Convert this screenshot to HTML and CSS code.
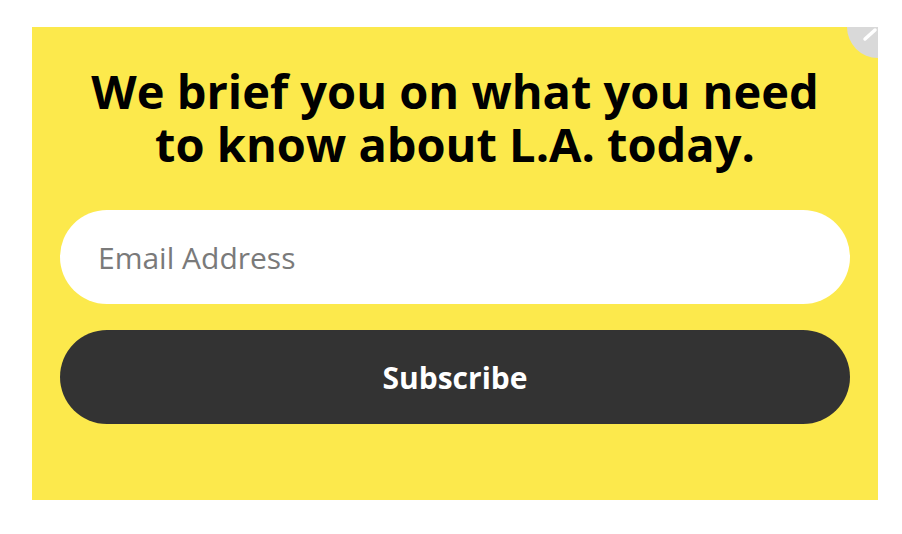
FILE: index.html
```html
<!DOCTYPE html>
<html lang="en">
<head>
    <meta charset="UTF-8">
    <title>Newsletter signup</title>
    <link rel="stylesheet" href="styles.css">
</head>
<body>
    <div class="popup">
        <button class="close-btn" aria-label="Close">
            <svg width="62" height="62" viewBox="0 0 62 62">
                <line x1="18" y1="43" x2="28" y2="34" stroke="#fff" stroke-width="3.5" stroke-linecap="round"/>
                <line x1="34" y1="34" x2="44" y2="43" stroke="#fff" stroke-width="3.5" stroke-linecap="round"/>
            </svg>
        </button>

        <h1 class="headline">We brief you on what you need<br>to know about L.A. today.</h1>

        <form class="signup-form">
            <input class="email-input" type="email" placeholder="Email Address">
            <button class="subscribe-btn" type="button">Subscribe</button>
        </form>
    </div>
</body>
</html>
```

FILE: styles.css
```css
body {
    margin: 0;
    padding: 27px 24px 0 32px;
    background: #fff;
    font-family: 'Open Sans', 'Noto Sans', sans-serif;
}

.popup {
    position: relative;
    overflow: hidden;
    width: 846px;
    height: 473px;
    box-sizing: border-box;
    padding: 38px 28px 0 28px;
    background: #fce94c;
}

.close-btn {
    position: absolute;
    top: -31px;
    right: -31px;
    width: 62px;
    height: 62px;
    padding: 0;
    border: none;
    border-radius: 50%;
    background: #d9d9d9;
    cursor: pointer;
}

.close-btn svg {
    display: block;
}

.headline {
    margin: 0 0 39px 0;
    font-size: 47px;
    line-height: 53px;
    font-weight: 700;
    text-align: center;
    color: #000;
}

.signup-form {
    display: flex;
    flex-direction: column;
    gap: 26px;
}

.email-input {
    height: 94px;
    box-sizing: border-box;
    padding: 0 38px;
    border: none;
    border-radius: 47px;
    background: #fff;
    font-family: inherit;
    font-size: 30px;
    color: #333;
    outline: none;
}

.email-input::placeholder {
    color: #7a7a7a;
}

.subscribe-btn {
    height: 94px;
    border: none;
    border-radius: 47px;
    background: #333;
    color: #fff;
    font-family: inherit;
    font-size: 30px;
    font-weight: 700;
    cursor: pointer;
}
```
